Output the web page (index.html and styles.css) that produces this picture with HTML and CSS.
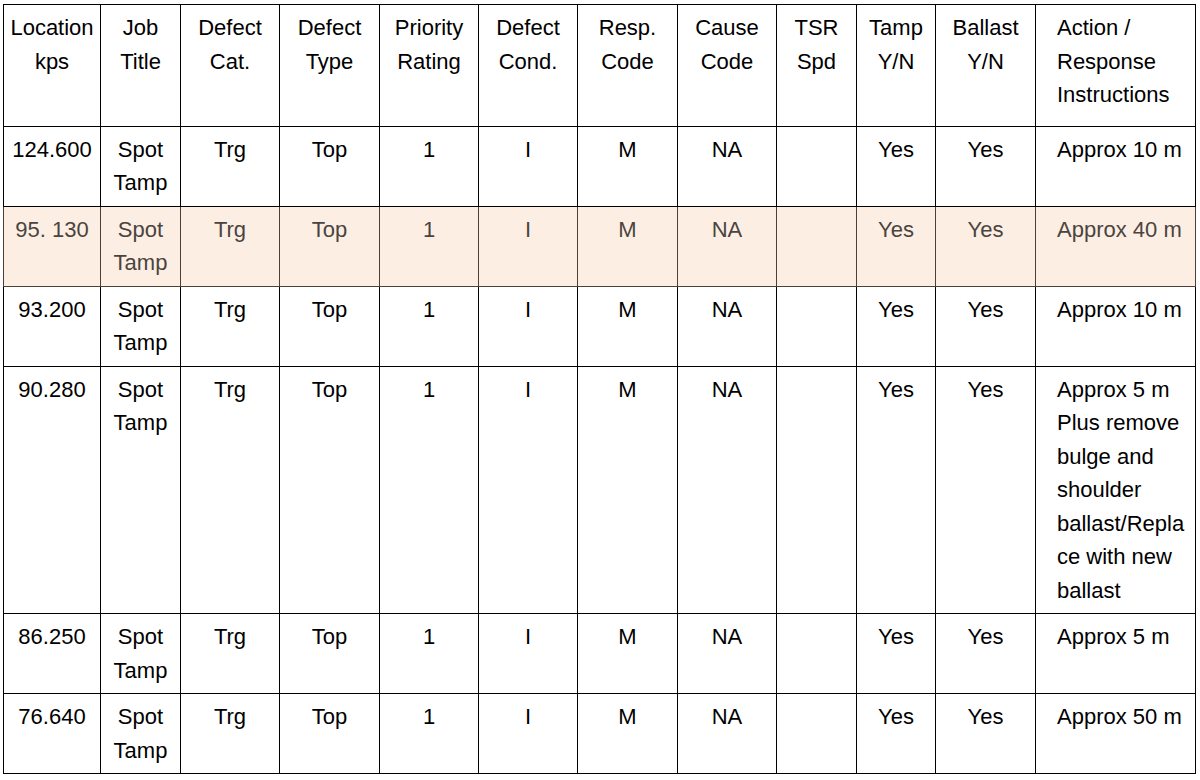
FILE: index.html
```html
<!DOCTYPE html>
<html>
<head>
<meta charset="utf-8">
<link rel="stylesheet" href="styles.css">
</head>
<body>
<div class="wrap">
<table class="grid">
  <colgroup>
    <col class="c-loc"><col class="c-job"><col class="c-std"><col class="c-std2"><col class="c-std">
    <col class="c-std"><col class="c-std2"><col class="c-std"><col class="c-tsr"><col class="c-tamp">
    <col class="c-std2"><col class="c-act">
  </colgroup>
  <thead>
    <tr class="head">
      <th>Location<br>kps</th>
      <th>Job<br>Title</th>
      <th>Defect<br>Cat.</th>
      <th>Defect<br>Type</th>
      <th>Priority<br>Rating</th>
      <th>Defect<br>Cond.</th>
      <th>Resp.<br>Code</th>
      <th>Cause<br>Code</th>
      <th>TSR<br>Spd</th>
      <th>Tamp<br>Y/N</th>
      <th>Ballast<br>Y/N</th>
      <th class="act">Action /<br>Response<br>Instructions</th>
    </tr>
  </thead>
  <tbody>
    <tr>
      <td>124.600</td><td>Spot<br>Tamp</td><td>Trg</td><td>Top</td><td>1</td><td>I</td><td>M</td><td>NA</td><td></td><td>Yes</td><td>Yes</td><td class="act">Approx 10 m</td>
    </tr>
    <tr class="hl">
      <td>95. 130</td><td>Spot<br>Tamp</td><td>Trg</td><td>Top</td><td>1</td><td>I</td><td>M</td><td>NA</td><td></td><td>Yes</td><td>Yes</td><td class="act">Approx 40 m</td>
    </tr>
    <tr>
      <td>93.200</td><td>Spot<br>Tamp</td><td>Trg</td><td>Top</td><td>1</td><td>I</td><td>M</td><td>NA</td><td></td><td>Yes</td><td>Yes</td><td class="act">Approx 10 m</td>
    </tr>
    <tr>
      <td>90.280</td><td>Spot<br>Tamp</td><td>Trg</td><td>Top</td><td>1</td><td>I</td><td>M</td><td>NA</td><td></td><td>Yes</td><td>Yes</td><td class="act">Approx 5 m<br>Plus remove<br>bulge and<br>shoulder<br>ballast/Repla<br>ce with new<br>ballast</td>
    </tr>
    <tr>
      <td>86.250</td><td>Spot<br>Tamp</td><td>Trg</td><td>Top</td><td>1</td><td>I</td><td>M</td><td>NA</td><td></td><td>Yes</td><td>Yes</td><td class="act">Approx 5 m</td>
    </tr>
    <tr>
      <td>76.640</td><td>Spot<br>Tamp</td><td>Trg</td><td>Top</td><td>1</td><td>I</td><td>M</td><td>NA</td><td></td><td>Yes</td><td>Yes</td><td class="act">Approx 50 m</td>
    </tr>
  </tbody>
</table>
</div>
</body>
</html>
```

FILE: styles.css
```css
html, body {
  margin: 0;
  padding: 0;
  background: #ffffff;
}

.wrap {
  padding: 4px 0 0 3px;
}

.grid {
  border-collapse: collapse;
  table-layout: fixed;
  width: 1193px;
  font-family: "Liberation Sans", Arial, sans-serif;
  font-size: 22px;
  line-height: 33.5px;
  color: #000000;
}

.c-loc { width: 97px; }
.c-job { width: 80px; }
.c-std { width: 99px; }
.c-std2 { width: 100px; }
.c-tsr { width: 80px; }
.c-tamp { width: 79px; }
.c-act { width: 160px; }

.grid th,
.grid td {
  border: 1px solid #000000;
  text-align: center;
  vertical-align: top;
  font-weight: normal;
  padding: 6px 3px 6px 3px;
  white-space: nowrap;
}

.grid th {
  padding-bottom: 14px;
}

.grid .act {
  text-align: left;
  padding-left: 21px;
  padding-right: 4px;
}

.grid tr.hl td {
  background: #fdeee4;
  color: #4a4440;
  border-color: #4e4036;
}
```
